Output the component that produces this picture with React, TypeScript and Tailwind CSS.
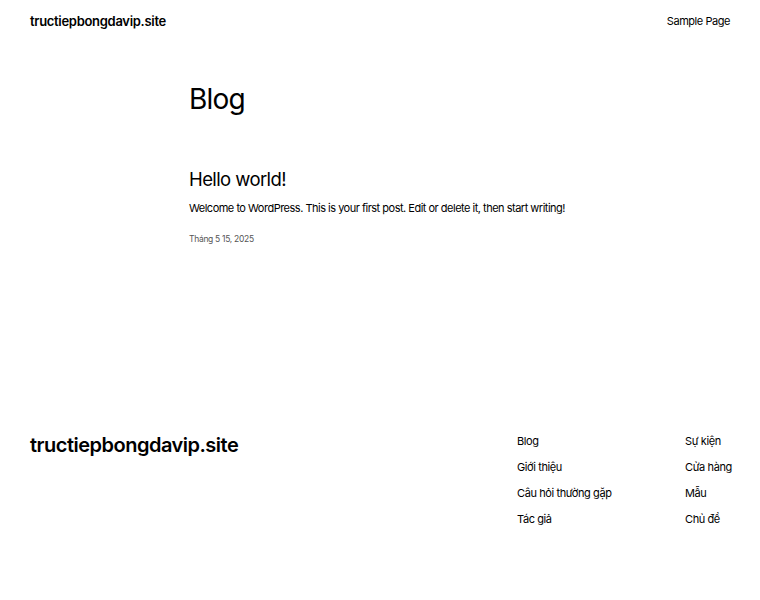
const font = { fontFamily: 'Inter, "Noto Sans", sans-serif' };

const footerCols = [
  ['Blog', 'Giới thiệu', 'Câu hỏi thường gặp', 'Tác giả'],
  ['Sự kiện', 'Cửa hàng', 'Mẫu', 'Chủ đề'],
];

export default function App() {
  return (
    <div className="min-h-[600px] bg-white text-black" style={font}>
      <header className="flex items-center justify-between px-[30px] pt-[11px]">
        <a className="text-[13px] font-semibold leading-[20px] tracking-[-0.3px]">tructiepbongdavip.site</a>
        <nav className="text-[11px] leading-[20px] tracking-[-0.45px]">Sample Page</nav>
      </header>

      <main className="mx-auto w-[382px] pt-[54px]">
        <h1 className="text-[28px] leading-none tracking-[-0.8px]">Blog</h1>
        <article className="pt-[57px]">
          <h2 className="text-[18.5px] leading-none tracking-[-0.6px]">Hello world!</h2>
          <p className="mt-[11px] whitespace-nowrap text-[11px] leading-[16.5px] tracking-[-0.5px]">
            Welcome to WordPress. This is your first post. Edit or delete it, then start writing!
          </p>
          <div className="mt-[16px] text-[8.5px] leading-[14px] tracking-[-0.3px] text-[#555]">
            Tháng 5 15, 2025
          </div>
        </article>
      </main>

      <footer className="flex justify-between px-[30px] pt-[184px]">
        <div className="text-[20px] font-semibold leading-[30px] tracking-[-0.5px]">tructiepbongdavip.site</div>
        <div className="flex">
          {footerCols.map((col, i) => (
            <ul key={i} className={i === 0 ? 'w-[168px]' : 'w-[45px]'}>
              {col.map((item) => (
                <li key={item} className="h-[26px] whitespace-nowrap text-[11px] leading-[22px] tracking-[-0.4px]">
                  {item}
                </li>
              ))}
            </ul>
          ))}
        </div>
      </footer>
    </div>
  );
}
